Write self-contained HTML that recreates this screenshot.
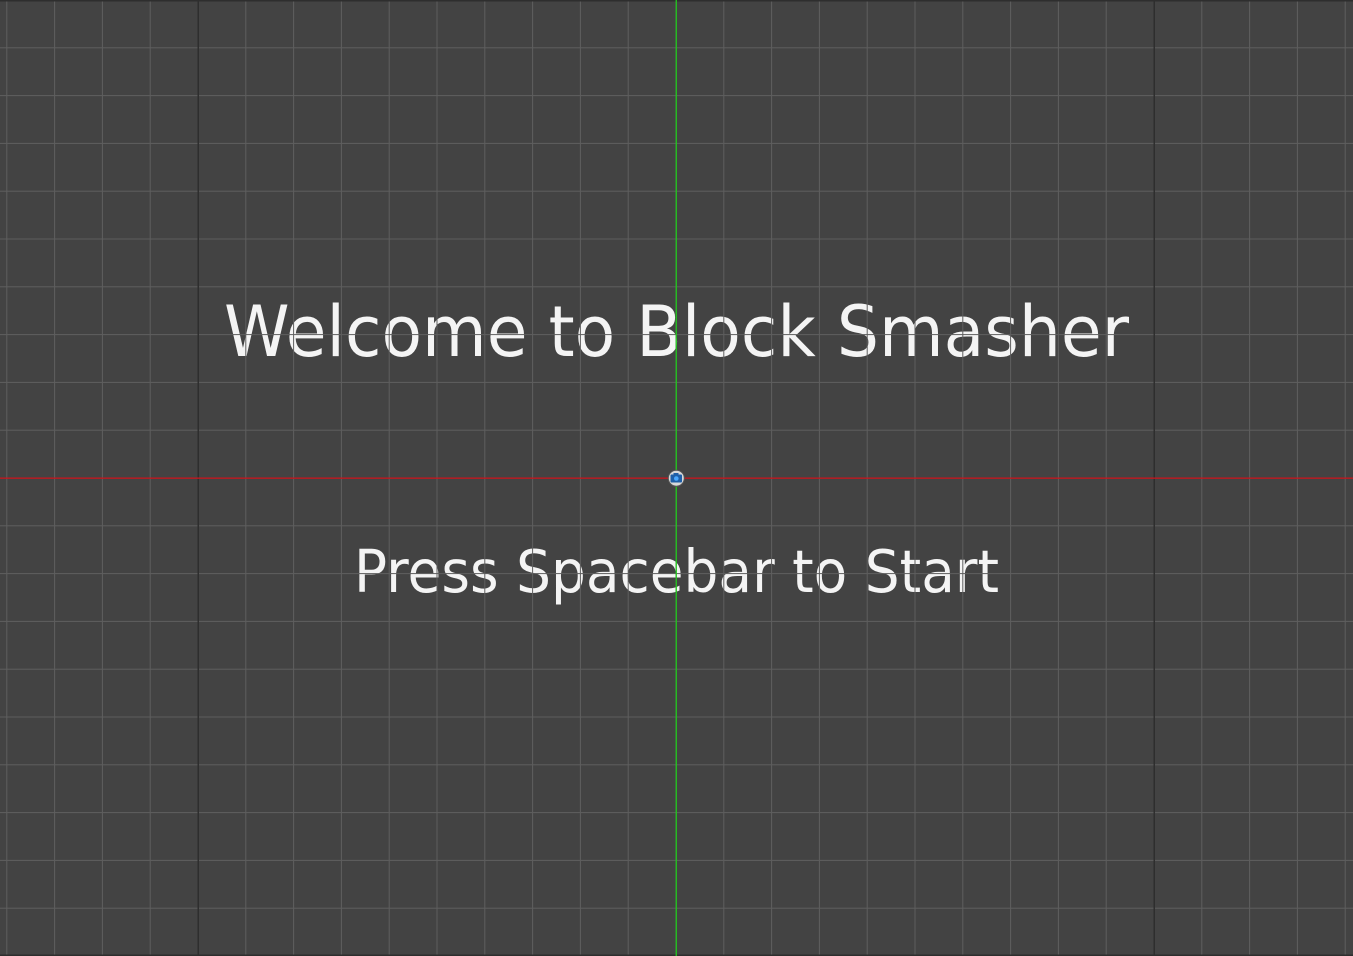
<!DOCTYPE html>
<html><head><style>
html,body{margin:0;padding:0;background:#434343;width:1353px;height:956px;overflow:hidden}
svg{display:block}
</style></head><body>
<svg width="1353" height="956" viewBox="0 0 1353 956" xmlns="http://www.w3.org/2000/svg">
<defs>
<pattern id="g" patternUnits="userSpaceOnUse" x="6.3" y="-0.5" width="47.8" height="47.8">
<rect x="0" y="0" width="1" height="47.8" fill="#5e5e5e"/>
<rect x="0" y="0" width="47.8" height="1" fill="#5e5e5e"/>
</pattern>
</defs>
<rect width="1353" height="956" fill="#434343"/>
<g fill="#f4f4f4" font-family="'DejaVu Sans','Liberation Sans',sans-serif">
<text x="224" y="356" font-size="70" textLength="905" lengthAdjust="spacingAndGlyphs">Welcome to Block Smasher</text>
<text x="354" y="592" font-size="59" textLength="645" lengthAdjust="spacingAndGlyphs">Press Spacebar to Start</text>
</g>
<rect width="1353" height="956" fill="url(#g)"/>
<rect x="197.5" y="0" width="1.5" height="956" fill="#2e2e2e"/>
<rect x="1153.5" y="0" width="1.5" height="956" fill="#2e2e2e"/>
<rect x="0" y="0" width="1353" height="1.5" fill="#2e2e2e"/>
<rect x="0" y="954.5" width="1353" height="1.5" fill="#2e2e2e"/>
<rect x="0" y="477.5" width="1353" height="1.3" fill="#c8161d"/>
<rect x="675.6" y="0" width="1.3" height="956" fill="#22c81e"/>
<circle cx="676.3" cy="478.2" r="8" fill="#d8d8d8" stroke="#555" stroke-width="1"/>
<rect x="670.5" y="474.5" width="11.5" height="8" rx="1" fill="#1f5fa8"/>
<rect x="673.5" y="473" width="5" height="2" fill="#1f5fa8"/>
<circle cx="676.3" cy="478.5" r="2.3" fill="#4aa8ff"/>
</svg>
</body></html>
